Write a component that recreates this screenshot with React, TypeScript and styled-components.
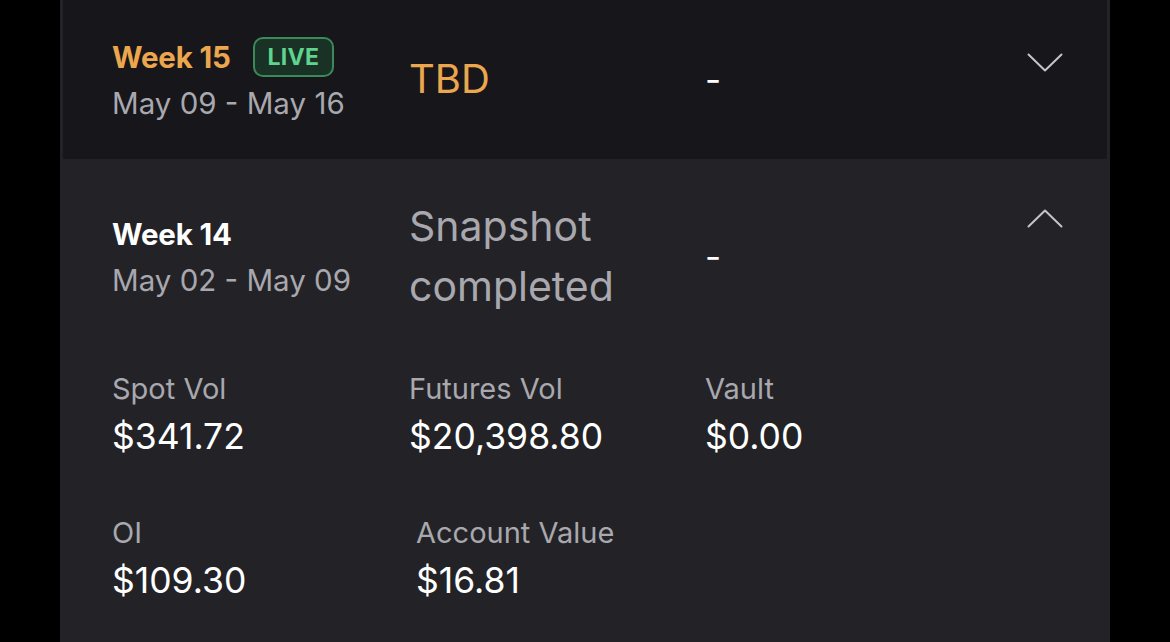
import React, { FC, ReactNode } from "react";
import styled, { createGlobalStyle } from "styled-components";

// Global
const GlobalStyle = createGlobalStyle`
  html, body {
    margin: 0;
    padding: 0;
    background: #000;
  }
  body {
    font-family: Inter, "Noto Sans", "Liberation Sans", sans-serif;
  }
`;

// Styles
const Page = styled.div`
  width: 1170px;
  height: 642px;
  overflow: hidden;
  background: #000;
  display: flex;
  justify-content: center;
`;

const Panel = styled.div`
  width: 1050px;
  background: #232327;
  display: flex;
  flex-direction: column;
`;

const WeekRow = styled.div<{ $active?: boolean }>`
  display: flex;
  align-items: center;
  background: ${(p) => (p.$active ? "transparent" : "#16161b")};
  margin: ${(p) => (p.$active ? "0" : "0 3px")};
  padding: ${(p) => (p.$active ? "37px 47px 0 52px" : "37px 44px 38px 49px")};
`;

const WeekCol = styled.div`
  width: 297px;
  flex-shrink: 0;
  display: flex;
  flex-direction: column;
  gap: 8px;
`;

const TitleLine = styled.div`
  display: flex;
  align-items: center;
  height: 40px;
  gap: 22px;
`;

const WeekTitle = styled.span<{ $live?: boolean }>`
  font-size: 29.5px;
  font-weight: 700;
  letter-spacing: -0.2px;
  color: ${(p) => (p.$live ? "#eba64e" : "#ffffff")};
`;

const LiveBadge = styled.span`
  box-sizing: border-box;
  height: 40px;
  display: inline-flex;
  align-items: center;
  padding: 0 13px;
  border: 2px solid #3b8a5b;
  border-radius: 10px;
  background: #1a3125;
  color: #5fd48f;
  font-size: 23px;
  font-weight: 700;
  letter-spacing: 0.3px;
`;

const DateRange = styled.div`
  font-size: 29.5px;
  line-height: 36px;
  color: #a8a8ae;
`;

const StatusCol = styled.div<{ $pending?: boolean }>`
  width: 296px;
  flex-shrink: 0;
  font-size: ${(p) => (p.$pending ? "40px" : "41px")};
  line-height: 60px;
  color: ${(p) => (p.$pending ? "#eba64e" : "#a8a8ae")};
`;

const RewardCol = styled.div`
  flex: 1;
  font-size: 35px;
  color: #ffffff;
`;

const Chevron = styled.svg<{ $offset: number }>`
  align-self: flex-start;
  margin-top: ${(p) => p.$offset}px;
  flex-shrink: 0;
`;

const StatsGrid = styled.div`
  display: grid;
  grid-template-columns: 297px 296px 1fr;
  row-gap: 56px;
  padding: 55px 47px 0 52px;
`;

const Stat = styled.div<{ $shift?: number }>`
  display: flex;
  flex-direction: column;
  gap: 8px;
  padding-left: ${(p) => p.$shift ?? 0}px;
`;

const StatLabel = styled.div`
  font-size: 29px;
  line-height: 36px;
  color: #a8a8ae;
`;

const StatValue = styled.div`
  font-size: 35.5px;
  line-height: 44px;
  color: #ffffff;
`;

// Components
const ChevronIcon: FC<{ up?: boolean; offset: number }> = ({ up, offset }) => (
  <Chevron $offset={offset} width="36" height="19" viewBox="0 0 36 19">
    <polyline
      points={up ? "1.5,17.5 18,1.5 34.5,17.5" : "1.5,1.5 18,17.5 34.5,1.5"}
      fill="none"
      stroke="#c4c4c9"
      strokeWidth="2"
      strokeLinecap="round"
      strokeLinejoin="round"
    />
  </Chevron>
);

interface StatItem {
  label: string;
  value: string;
  shift?: number;
}

const stats: StatItem[] = [
  { label: "Spot Vol", value: "$341.72" },
  { label: "Futures Vol", value: "$20,398.80" },
  { label: "Vault", value: "$0.00" },
  { label: "OI", value: "$109.30" },
  { label: "Account Value", value: "$16.81", shift: 7 },
];

const WeekInfo: FC<{ title: string; dates: string; live?: boolean; badge?: ReactNode }> = ({
  title,
  dates,
  live,
  badge,
}) => (
  <WeekCol>
    <TitleLine>
      <WeekTitle $live={live}>{title}</WeekTitle>
      {badge}
    </TitleLine>
    <DateRange>{dates}</DateRange>
  </WeekCol>
);

const App: FC = () => (
  <>
    <GlobalStyle />
    <Page>
      <Panel>
        <WeekRow>
          <WeekInfo title="Week 15" dates="May 09 - May 16" live badge={<LiveBadge>LIVE</LiveBadge>} />
          <StatusCol $pending>TBD</StatusCol>
          <RewardCol>-</RewardCol>
          <ChevronIcon offset={16} />
        </WeekRow>

        <WeekRow $active>
          <WeekInfo title="Week 14" dates="May 02 - May 09" />
          <StatusCol>Snapshot completed</StatusCol>
          <RewardCol>-</RewardCol>
          <ChevronIcon up offset={13} />
        </WeekRow>

        <StatsGrid>
          {stats.map((s) => (
            <Stat key={s.label} $shift={s.shift}>
              <StatLabel>{s.label}</StatLabel>
              <StatValue>{s.value}</StatValue>
            </Stat>
          ))}
        </StatsGrid>
      </Panel>
    </Page>
  </>
);

export default App;
